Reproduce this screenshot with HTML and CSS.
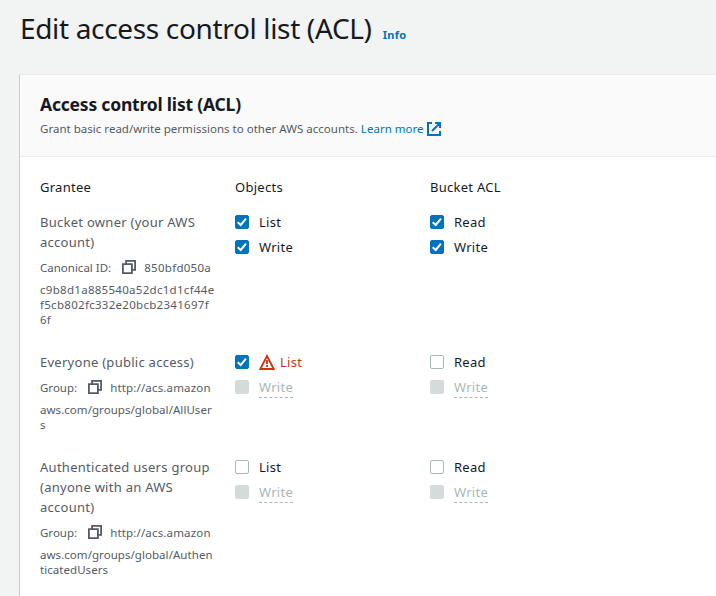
FILE: index.html
```
<!DOCTYPE html>
<html lang="en">
<head>
<meta charset="utf-8">
<title>Edit access control list (ACL)</title>
<link rel="stylesheet" href="styles.css">
</head>
<body>
<svg class="defs" aria-hidden="true">
  <symbol id="copy" viewBox="0 0 14 14"><path d="M.9 4.1h9v9h-9zM4.1 4V.9h9v9H10" fill="none" stroke="currentColor" stroke-width="1.8"/></symbol>
  <symbol id="tick" viewBox="0 0 14 14"><path d="M2.7 7.3 5.7 10 11 3.6" fill="none" stroke="currentColor" stroke-width="2"/></symbol>
</svg>
<header class="page-head">
  <h1>Edit access control list (ACL)</h1>
  <a class="info">Info</a>
</header>
<section class="panel">
  <header class="panel-head">
    <h2>Access control list (ACL)</h2>
    <p>Grant basic read/write permissions to other AWS accounts. <a class="learn">Learn more</a><svg class="external" viewBox="0 0 14 14"><path d="M5 1H1v12h12V9M8 1h5v5M13 1 5 9" fill="none" stroke="currentColor" stroke-width="2"/></svg></p>
  </header>
  <div class="acl">
    <div class="row titles"><div>Grantee</div><div>Objects</div><div>Bucket ACL</div></div>
    <div class="row owner">
      <div class="grantee">
        <div class="name">Bucket owner (your AWS<br>account)</div>
        <div class="id"><span class="key">Canonical ID:</span><svg class="copy"><use href="#copy"/></svg><span class="first hex">850bfd050a</span></div>
        <div class="rest hex">c9b8d1a885540a52dc1d1cf44e<br>f5cb802fc332e20bcb2341697f<br>6f</div>
      </div>
      <div class="options">
        <label><span class="box on"><svg><use href="#tick"/></svg></span><span class="text">List</span></label>
        <label><span class="box on"><svg><use href="#tick"/></svg></span><span class="text">Write</span></label>
      </div>
      <div class="options">
        <label><span class="box on"><svg><use href="#tick"/></svg></span><span class="text">Read</span></label>
        <label><span class="box on"><svg><use href="#tick"/></svg></span><span class="text">Write</span></label>
      </div>
    </div>
    <div class="row everyone">
      <div class="grantee">
        <div class="name">Everyone (public access)</div>
        <div class="id"><span class="key">Group:</span><svg class="copy"><use href="#copy"/></svg><span class="first">http://acs.amazon</span></div>
        <div class="rest">aws.com/groups/global/AllUser<br>s</div>
      </div>
      <div class="options">
        <label class="danger"><span class="box on"><svg><use href="#tick"/></svg></span><svg class="warn" viewBox="0 0 16 16"><path d="M8 2 14.7 15H1.3z" fill="none" stroke="currentColor" stroke-width="1.8"/><path d="M8 6v4M8 11v2" stroke="currentColor" stroke-width="1.8"/></svg><span class="text">List</span></label>
        <label class="off"><span class="box"></span><span class="text">Write</span></label>
      </div>
      <div class="options">
        <label><span class="box"></span><span class="text">Read</span></label>
        <label class="off"><span class="box"></span><span class="text">Write</span></label>
      </div>
    </div>
    <div class="row">
      <div class="grantee">
        <div class="name">Authenticated users group<br>(anyone with an AWS<br>account)</div>
        <div class="id"><span class="key">Group:</span><svg class="copy"><use href="#copy"/></svg><span class="first">http://acs.amazon</span></div>
        <div class="rest">aws.com/groups/global/Authen<br>ticatedUsers</div>
      </div>
      <div class="options">
        <label><span class="box"></span><span class="text">List</span></label>
        <label class="off"><span class="box"></span><span class="text">Write</span></label>
      </div>
      <div class="options">
        <label><span class="box"></span><span class="text">Read</span></label>
        <label class="off"><span class="box"></span><span class="text">Write</span></label>
      </div>
    </div>
  </div>
</section>
</body>
</html>
```
FILE: styles.css
```
* { box-sizing: border-box; }
html { overflow: hidden; }
body { margin: 0; height: 596px; overflow: hidden; background: #f2f3f3; color: #16191f; font: 13px/20px "Noto Sans", sans-serif; letter-spacing: .27px; }
h1, h2, p { margin: 0; }
.defs { display: none; }
.page-head { display: flex; align-items: baseline; gap: 11px; height: 74px; padding: 10px 20px 0; white-space: nowrap; }
h1 { font-size: 28px; line-height: 36px; font-weight: 400; letter-spacing: -.34px; }
a { color: #0073bb; }
.info { font-size: 11px; font-weight: 700; letter-spacing: .3px; }
.panel { margin-left: 19px; height: 540px; background: #fff; border-top: 1px solid #eaeded; border-left: 1px solid #c8cccc; white-space: nowrap; }
.panel-head { height: 82px; padding: 18px 20px 0; background: #fafafa; border-bottom: 1px solid #eaeded; }
h2 { font-size: 17.5px; line-height: 22px; font-weight: 700; letter-spacing: -.2px; }
.panel-head p { display: flex; align-items: center; margin-top: 4px; font-size: 11.5px; letter-spacing: .02px; color: #545b64; white-space: pre; }
.external { width: 14px; height: 14px; margin-left: 3px; color: #0073bb; }
.acl { padding: 20px; }
.row { display: grid; grid-template-columns: 195px 195px 1fr; }
.titles { height: 35px; }
.owner { height: 140px; }
.everyone { height: 105px; }
.grantee { color: #545b64; }
.id { display: flex; align-items: center; height: 20px; margin-top: 5px; font-size: 11.5px; letter-spacing: 0; }
.id span { padding-top: 1px; }
.first { letter-spacing: .16px; }
.copy { width: 14px; height: 14px; margin: 0 8px 0 11px; }
.rest { margin-top: 5px; font-size: 11.5px; line-height: 15px; letter-spacing: .05px; }
.hex { letter-spacing: .29px; }
label { display: flex; align-items: center; height: 20px; margin-bottom: 5px; }
.box { width: 14px; height: 14px; margin-right: 10px; border: 1px solid #aab7b8; border-radius: 2px; background: #fff; }
.box svg { display: block; width: 14px; height: 14px; margin: -1px; }
.box.on { background: #0073bb; border-color: #0073bb; color: #fff; }
.danger { color: #d13212; }
.warn { width: 16px; height: 16px; margin-right: 5px; }
.off { color: #aab7b8; }
.off .box { background: #d5dbdb; border-color: #d5dbdb; }
.off .text { height: 21px; border-bottom: 1px dashed #aab7b8; }
```
